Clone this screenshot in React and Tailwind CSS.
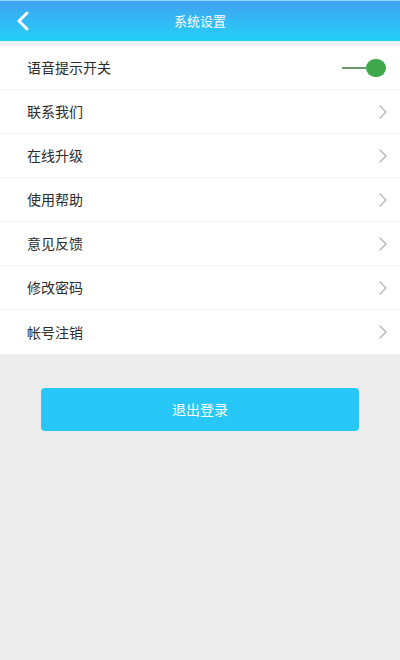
import React, { useState } from "react";

const items = ["联系我们", "在线升级", "使用帮助", "意见反馈", "修改密码", "帐号注销"];

const Chevron = () => (
  <svg width="10" height="16" viewBox="0 0 10 16" fill="none">
    <path d="M2 2l6 6-6 6" stroke="#bdbdbd" strokeWidth="1.6" strokeLinecap="round" strokeLinejoin="round" />
  </svg>
);

const App = () => {
  const [voiceOn, setVoiceOn] = useState(true);

  return (
    <div
      className="w-[400px] h-[660px] bg-[#ededed] flex flex-col"
      style={{ fontFamily: '"Noto Sans CJK SC", "Noto Sans", sans-serif' }}
    >
      <div className="h-[41px] bg-gradient-to-b from-[#3ea3f0] to-[#1fd0f8] border-t border-[#8fd8fb] flex items-center relative">
        <button className="absolute left-[14px] top-[9px]">
          <svg width="18" height="22" viewBox="0 0 18 22" fill="none">
            <path d="M13 3L5 11l8 8" stroke="#ffffff" strokeWidth="3" strokeLinecap="round" strokeLinejoin="round" />
          </svg>
        </button>
        <div className="flex-1 text-center text-white text-[13px]">系统设置</div>
      </div>
      <div className="h-[5px] bg-[#e9f3f6]" />

      <div className="bg-white">
        <div className="h-[44px] flex items-center justify-between pl-[27px] pr-[14px] border-b border-[#f2f2f2]">
          <span className="text-[14px] text-[#2b2b2b]">语音提示开关</span>
          <button onClick={() => setVoiceOn(!voiceOn)} className="flex items-center">
            <span className="w-[24px] h-[2px] bg-[#6a9a6c]" />
            <span className="w-[20px] h-[18px] rounded-full bg-[#3fa84a]" />
          </button>
        </div>
        {items.map((t, i) => (
          <div
            key={t}
            className={`h-[44px] flex items-center justify-between pl-[27px] pr-[12px] ${
              i < items.length - 1 ? "border-b border-[#f2f2f2]" : ""
            }`}
          >
            <span className="text-[14px] text-[#2b2b2b]">{t}</span>
            <Chevron />
          </div>
        ))}
      </div>

      <div className="px-[41px] pt-[34px]">
        <button className="w-full h-[43px] rounded-[4px] bg-[#27c8f7] text-white text-[14px]">退出登录</button>
      </div>
    </div>
  );
};

export default App;
